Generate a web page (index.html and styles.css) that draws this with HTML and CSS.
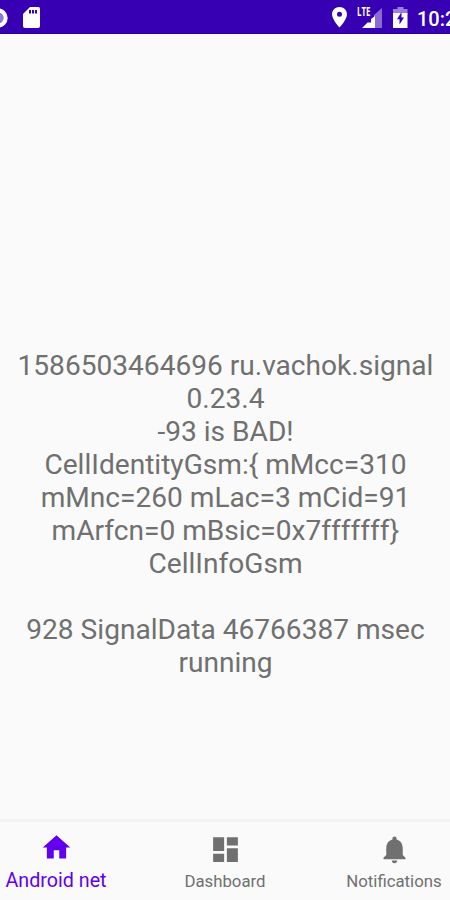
FILE: index.html
```html
<!DOCTYPE html>
<html lang="en">
<head>
  <meta charset="UTF-8" />
  <title>Android net</title>
  <meta name="viewport" content="width=device-width, initial-scale=1.0" />
  <link rel="stylesheet" href="styles.css">
</head>
<body>
  <header class="status-bar">
    <div class="status-left">
      <svg class="ring" width="20" height="22" viewBox="0 0 20 22">
        <circle cx="10" cy="11" r="7.7" fill="#8f78d4" stroke="#fff" stroke-width="4" />
      </svg>
      <svg width="18" height="22" viewBox="0 0 18 22">
        <path fill="#fff" d="M7 0h8.500Q17 0 17 1.800V19q0 2-2 2H2q-2 0-2-2V7z" />
        <path fill="#3700b3" d="M6 3h2v3.500H6zM9 3h2v3.500H9zM12 3h2v3.500h-2z" />
      </svg>
    </div>
    <div class="status-right">
      <svg class="pin" width="15" height="21" viewBox="0 0 15 21">
        <path fill="#fff" fill-rule="evenodd" d="M7.500 0C3.300 0 0 3.200 0 7.300 0 12.700 7.500 20.500 7.500 20.500S15 12.700 15 7.300C15 3.200 11.700 0 7.500 0zM7.500 4.800a2.500 2.500 0 1 1 0 5 2.500 2.500 0 0 1 0-5z" />
      </svg>
      <svg class="signal" width="26" height="22" viewBox="0 0 26 22">
        <path fill="#8a6bd4" d="M25 1v20H17V8z" />
        <path fill="#fff" d="M18 9v12H5l5.500-5.500H14V12z" />
        <text class="lte" x="0" y="9.300" textLength="13.500" lengthAdjust="spacingAndGlyphs">LTE</text>
      </svg>
      <svg class="battery" width="15" height="21" viewBox="0 0 15 21">
        <path fill="#9a80dc" d="M4.500 0h6v2H14.500v5H0V2h4.500z" />
        <path fill="#fff" d="M0 6h14.500v15H0z" />
        <path fill="#3700b3" d="M8.500 5v5.500H11L6.500 17.500v-5.300H4z" />
      </svg>
      <span class="clock">10:28</span>
    </div>
  </header>

  <main class="content">
    <p>
      1586503464696 ru.vachok.signal<br>
      0.23.4<br>
      -93 is BAD!<br>
      CellIdentityGsm:{ mMcc=310<br>
      mMnc=260 mLac=3 mCid=91<br>
      mArfcn=0 mBsic=0x7fffffff}<br>
      CellInfoGsm<br>
      <br>
      928 SignalData 46766387 msec<br>
      running
    </p>
  </main>

  <nav class="bottom-nav">
    <a class="nav-item active">
      <svg class="nav-icon" viewBox="0 0 24 24"><path d="M10 20v-6h4v6h5v-8h3L12 3 2 12h3v8z" /></svg>
      <span>Android net</span>
    </a>
    <a class="nav-item">
      <svg class="nav-icon" viewBox="0 0 24 24"><path d="M3 13h8V3H3v10zm0 8h8v-6H3v6zm10 0h8V11h-8v10zm0-18v6h8V3h-8z" /></svg>
      <span>Dashboard</span>
    </a>
    <a class="nav-item">
      <svg class="nav-icon" viewBox="0 0 24 24"><path d="M12 22c1.100 0 2-.9 2-2h-4c0 1.100.89 2 2 2zm6-6v-5c0-3.070-1.640-5.640-4.500-6.320V4c0-.83-.67-1.500-1.500-1.500s-1.500.67-1.500 1.500v.68C7.630 5.360 6 7.920 6 11v5l-2 2v1h16v-1l-2-2z" /></svg>
      <span>Notifications</span>
    </a>
  </nav>
</body>
</html>
```

FILE: styles.css
```css
* { box-sizing: border-box; margin: 0; padding: 0; }
html, body { width: 100%; height: 100%; overflow: hidden; }
body {
  display: flex; flex-direction: column;
  background: #fafafa; color: #707070; font-family: Roboto, sans-serif;
}

/* Status bar */
.status-bar {
  display: flex; justify-content: space-between; flex: none;
  height: 34px; background: #3700b3; border-bottom: 1px solid #2c00a0; color: #fff;
}
.status-left, .status-right { display: flex; align-items: flex-start; padding-top: 7px; }
.status-left { gap: 15px; }
.ring { margin-left: -12px; }
.status-right { width: 118px; flex: none; overflow: hidden; }
.status-right svg { flex: none; }
.signal { margin-left: 10px; }
.battery { margin-left: 10px; }
.lte { font: bold 12.500px "Open Sans", sans-serif; fill: #fff; }
.clock {
  margin-left: 9px; font-size: 20px; font-weight: 500; line-height: 24px; white-space: nowrap;
}

/* Signal info */
.content {
  flex: 1; display: flex; flex-direction: column; align-items: center;
  padding: 315px 0 0 1px; overflow: hidden;
}
.content p { font-size: 28.100px; line-height: 33px; text-align: center; white-space: nowrap; }

/* Bottom navigation */
.bottom-nav {
  display: flex; justify-content: center; flex: none;
  height: 81px; border-top: 3px solid #f3f3f3;
}
.nav-item {
  flex: 0 0 169px; display: flex; flex-direction: column; align-items: center;
  padding-top: 11px; font-size: 16.800px; line-height: 20px;
}
.nav-icon { width: 33px; height: 33px; fill: #707070; }
.nav-item span { margin-top: 5px; }
.active { padding-top: 9px; color: #6200ee; font-size: 19.700px; }
.active .nav-icon { fill: #6200ee; }
.active span { margin-top: 7px; }
```
